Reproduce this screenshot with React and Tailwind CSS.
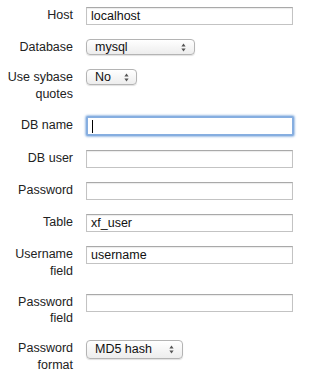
import React from "react";

const font = { fontFamily: '"Liberation Sans", Arial, Helvetica, sans-serif' };

function Arrows() {
  return (
    <svg width="5" height="9" viewBox="0 0 5 9" className="shrink-0">
      <path d="M2.5 0.5 L4.6 3.4 L0.4 3.4 Z" fill="#555" />
      <path d="M2.5 8.5 L4.6 5.6 L0.4 5.6 Z" fill="#555" />
    </svg>
  );
}

function TextBox({ value, focused }) {
  if (focused) {
    return (
      <div className="mt-[-1px] h-[20px] w-[208px] rounded-[2px] border-[2px] border-[#86aee0] bg-white shadow-[0_0_2px_1px_rgba(120,165,220,0.7)] flex items-center pl-[4px]">
        <span className="block h-[13px] w-px bg-black" />
      </div>
    );
  }
  return (
    <div className="h-[18px] w-[207px] border border-[#c3c3c3] border-t-[#a9a9a9] bg-white shadow-[inset_0_1px_1px_rgba(0,0,0,0.08)] flex items-center pl-[4px] text-[12.5px] text-[#111]">
      {value}
    </div>
  );
}

function Select({ value, width, height = "h-[16px]", arrowRight = "pr-[8px]" }) {
  return (
    <div
      className={`${width} ${height} rounded-[4px] border border-[#b4b4b4] bg-gradient-to-b from-white to-[#ededed] shadow-[0_1px_1px_rgba(0,0,0,0.12)] flex items-center justify-between pl-[8px] ${arrowRight} text-[12.5px] text-[#111]`}
    >
      <span>{value}</span>
      <Arrows />
    </div>
  );
}

function Row({ label, children, labelClass = "leading-[17px]", className = "" }) {
  return (
    <div className={`flex items-start gap-[13px] ${className}`}>
      <div className={`w-[73px] shrink-0 text-right text-[12.5px] text-[#222] ${labelClass}`}>
        {label}
      </div>
      {children}
    </div>
  );
}

export default function App() {
  return (
    <div className="w-[300px] h-[379px] bg-white pt-[7px]" style={font}>
      <div className="flex flex-col gap-[14px]">
        <Row label="Host">
          <TextBox value="localhost" />
        </Row>
        <Row label="Database" labelClass="leading-[16px]">
          <Select value="mysql" width="w-[109px]" />
        </Row>
        <Row label={<>Use sybase<br />quotes</>}>
          <Select value="No" width="w-[51px]" arrowRight="pr-[7px]" />
        </Row>
        <Row label="DB name">
          <TextBox focused />
        </Row>
        <Row label="DB user">
          <TextBox value="" />
        </Row>
        <Row label="Password">
          <TextBox value="" />
        </Row>
        <Row label="Table">
          <TextBox value="xf_user" />
        </Row>
        <Row label={<>Username<br />field</>}>
          <TextBox value="username" />
        </Row>
        <Row label={<>Password<br />field</>} labelClass="leading-[16px]">
          <TextBox value="" />
        </Row>
        <Row label={<>Password<br />format</>}>
          <Select value="MD5 hash" width="w-[97px]" height="h-[19px]" />
        </Row>
      </div>
    </div>
  );
}
